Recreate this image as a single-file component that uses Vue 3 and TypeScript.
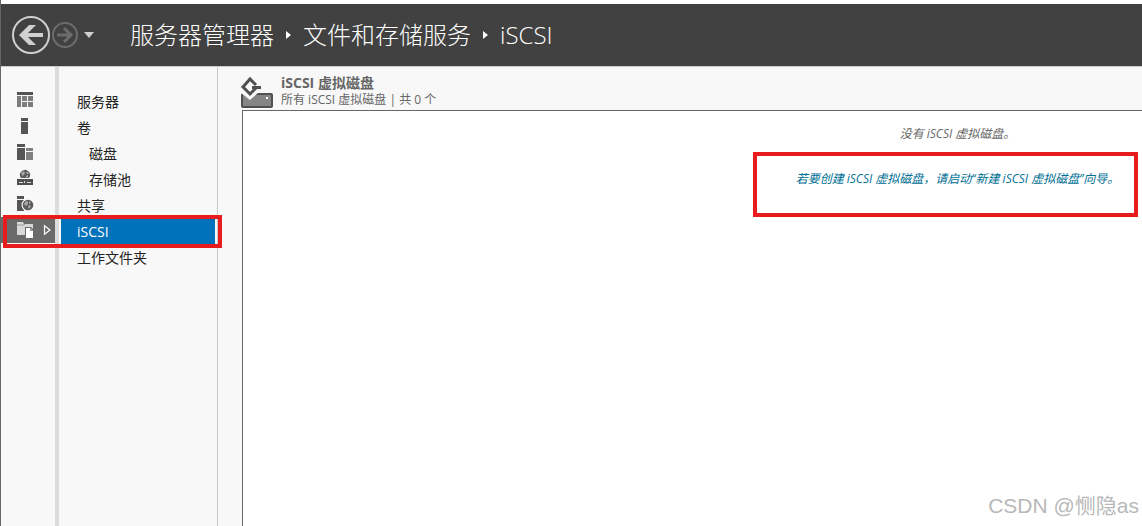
<script setup lang="ts">
import { ref } from 'vue'

interface NavItem {
  label: string
  nested?: boolean
}

const crumbs: string[] = ['服务器管理器', '文件和存储服务', 'iSCSI']
const railItems: string[] = ['仪表板', '本地服务器', '所有服务器', '存储', '远程', '文件和存储服务']
const navItems: NavItem[] = [
  { label: '服务器' },
  { label: '卷' },
  { label: '磁盘', nested: true },
  { label: '存储池', nested: true },
  { label: '共享' },
  { label: 'iSCSI' },
  { label: '工作文件夹' },
]
const activeRail = ref(5)
const activeNav = ref(5)
</script>

<template>
  <div class="window">
    <header class="topbar">
      <button class="tool back" aria-label="后退">
        <svg width="38" height="38" viewBox="0 0 38 38">
          <circle cx="19" cy="19" r="18" fill="none" stroke="#d0d0d0" stroke-width="2" />
          <path d="M7 19 17 9H24L16 17H31V21H16L24 29H17Z" fill="#d0d0d0" />
        </svg>
      </button>
      <button class="tool forward" aria-label="前进">
        <svg width="26" height="26" viewBox="0 0 26 26">
          <circle cx="13" cy="13" r="12" fill="none" stroke="#6c6c6c" stroke-width="2" />
          <path d="M5 13H20M12 6 19 13 12 20" fill="none" stroke="#6c6c6c" stroke-width="3" />
        </svg>
      </button>
      <button class="tool history" aria-label="历史记录">
        <svg width="10" height="6" viewBox="0 0 10 6"><path d="M0 0H10L5 6Z" fill="#d0d0d0" /></svg>
      </button>
      <nav class="crumbs">
        <template v-for="(crumb, i) in crumbs" :key="crumb">
          <svg v-if="i > 0" width="5" height="8" viewBox="0 0 5 8"><path d="M0 0 5 4 0 8Z" fill="#fff" /></svg>
          <a href="#">{{ crumb }}</a>
        </template>
      </nav>
    </header>

    <div class="body">
      <aside class="rail">
        <button
          v-for="(name, i) in railItems"
          :key="name"
          class="rail-item"
          :class="{ active: activeRail === i }"
          :aria-label="name"
          @click="activeRail = i"
        >
          <svg width="16" height="16" viewBox="0 0 16 16">
            <g v-if="i === 0">
              <path d="M0 0H16V3H0Z" fill="#555" />
              <path d="M0 4H4V15H0ZM5 4H10V9H5ZM11 4H16V9H11ZM5 10H10V15H5ZM11 10H16V15H11Z" fill="#7c7c7c" />
            </g>
            <path v-else-if="i === 1" d="M4 0H11V3H4ZM4 4H11V16H4Z" fill="#555" />
            <g v-else-if="i === 2">
              <path d="M0 0H8V3H0ZM0 4H8V16H0Z" fill="#555" />
              <path d="M9 4H16V7H9ZM9 8H16V16H9Z" fill="#808080" />
            </g>
            <g v-else-if="i === 3">
              <path d="M4 8A5 5 0 1 1 12 8Z" fill="#5c5c5c" />
              <path d="M4 3 7 1 8 3 6 6 5 5ZM9 2 11 2 12 4 10 4ZM9 6 11 5 11 7 9 8Z" fill="#a8a8a8" />
              <path d="M0 9H16V15H0Z" fill="#505050" />
              <path d="M2 12H6V13H2ZM7 11H8V13H7ZM10 12H14V13H10Z" fill="#ddd" />
            </g>
            <g v-else-if="i === 4">
              <path d="M0 0H7V3H0ZM0 4H7V15H0Z" fill="#555" />
              <circle cx="11" cy="9" r="6.5" fill="#f8f8f8" />
              <circle cx="11" cy="9" r="5.3" fill="#5c5c5c" />
              <path d="M7 8 9 5 11 6 11 8 9 10ZM12 5 14 7 12 8ZM12 9 14 10 12 13 11 11Z" fill="#a8a8a8" />
            </g>
            <g v-else>
              <path d="M0 0H6L7 2H16V13H0Z" fill="#d8d8d8" />
              <path d="M0 3H7L8 2" fill="none" stroke="#999" />
              <path d="M8 5H14L17 8V17H8Z" fill="#6a6a6a" />
              <path d="M9 6H13L16 9V16H9Z" fill="#fff" />
              <path d="M13 6V9H16Z" fill="#999" />
            </g>
          </svg>
          <svg v-if="activeRail === i" width="7" height="10" viewBox="0 0 7 10">
            <path d="M0.5 0.8 6 5 0.5 9.2Z" fill="none" stroke="#fff" stroke-width="1.2" />
          </svg>
        </button>
      </aside>

      <nav class="sidebar">
        <a
          v-for="(item, i) in navItems"
          :key="item.label"
          href="#"
          class="nav-item"
          :class="{ nested: item.nested, active: activeNav === i }"
          @click.prevent="activeNav = i"
        >{{ item.label }}</a>
      </nav>
      <div class="mark mark-nav"></div>

      <main class="content">
        <div class="heading">
          <svg width="32" height="32" viewBox="0 0 32 32">
            <rect x="1" y="17" width="30" height="13" rx="1" fill="#858585" stroke="#505050" stroke-width="2" />
            <rect x="25" y="20" width="2" height="2" fill="#fff" />
            <path d="M0 15H5L9 20 14 15H18L9 23 0 16Z" fill="#f8f8f8" />
            <path d="M16 8 9 2 2 10 9 17 16 11" fill="none" stroke="#f8f8f8" stroke-width="5" />
            <path d="M15 8 9 2 2 10 9 17 15 11" fill="none" stroke="#505050" stroke-width="3" />
            <path d="M11 9H20V12H11Z" fill="#505050" />
          </svg>
          <div>
            <h1>iSCSI 虚拟磁盘</h1>
            <p>所有 iSCSI 虚拟磁盘 | 共 0 个</p>
          </div>
        </div>
        <section class="panel">
          <p class="empty">没有 iSCSI 虚拟磁盘。</p>
          <div class="prompt">
            <a href="#">若要创建 iSCSI 虚拟磁盘，请启动“新建 iSCSI 虚拟磁盘”向导。</a>
            <div class="mark mark-prompt"></div>
          </div>
        </section>
      </main>
    </div>
    <div class="watermark">CSDN @恻隐as</div>
  </div>
</template>

<style>
body {
  margin: 0;
}
</style>

<style scoped>
* {
  box-sizing: border-box;
}
.window {
  position: relative;
  display: flex;
  flex-direction: column;
  min-height: 100vh;
  padding-top: 4px;
  border-left: 1px solid #666;
  background: #fff;
  overflow: hidden;
  font-family: "Open Sans", "Noto Sans CJK SC", sans-serif;
}
h1,
p {
  margin: 0;
}
a {
  color: inherit;
  text-decoration: none;
}
button {
  border: 0;
  padding: 0;
  background: none;
}
svg {
  display: block;
  flex: none;
  overflow: visible;
}
.topbar {
  display: flex;
  align-items: center;
  height: 62px;
  padding-left: 11px;
  background: #414141;
}
.forward {
  margin-left: 2px;
}
.history {
  margin-left: 6px;
}
.crumbs {
  display: flex;
  align-items: center;
  gap: 12px;
  margin-left: 36px;
  color: #fff;
  font-size: 24px;
  font-weight: 300;
  line-height: 32px;
  white-space: nowrap;
}
.body {
  position: relative;
  display: flex;
  flex: 1;
  border-top: 1px solid #ccc;
  background: #f8f8f8;
}
.rail {
  width: 58px;
  padding-top: 20px;
  border-right: 4px solid #dcdcdc;
}
.rail-item {
  display: flex;
  align-items: center;
  gap: 11px;
  width: 100%;
  height: 26px;
  padding-left: 16px;
}
.rail-item.active {
  background: #6a6a6a;
}
.sidebar {
  width: 159px;
  padding: 22px 2px 0;
  border-right: 1px solid #c8c8c8;
}
.nav-item {
  display: block;
  height: 26px;
  padding-left: 16px;
  color: #222;
  font-size: 14px;
  line-height: 26px;
}
.nav-item.nested {
  padding-left: 28px;
}
.nav-item.active {
  background: #0072bc;
  color: #fff;
}
.mark {
  position: absolute;
  border: 4px solid #e81c1c;
  pointer-events: none;
}
.mark-nav {
  left: 2px;
  top: 148px;
  width: 219px;
  height: 33px;
}
.content {
  display: flex;
  flex: 1;
  flex-direction: column;
  min-width: 0;
  padding-left: 23px;
}
.heading {
  display: flex;
  gap: 8px;
  height: 43px;
  padding-top: 8px;
  color: #666;
}
.heading svg {
  margin-top: 2px;
}
h1 {
  font-size: 14px;
  font-weight: 700;
  line-height: 16px;
}
.heading p {
  font-size: 12px;
  line-height: 18px;
}
.panel {
  flex: 1;
  margin-left: 1px;
  padding: 14px 0 0 530px;
  border-top: 1px solid #666;
  border-left: 1px solid #666;
  background: #fff;
  font-size: 12px;
  font-style: italic;
  line-height: 18px;
  text-align: center;
  white-space: nowrap;
}
.empty {
  color: #666;
}
.prompt {
  position: relative;
  margin-top: 27px;
  color: #006f94;
}
.mark-prompt {
  inset: -18px 4px auto -20px;
  height: 65px;
}
.watermark {
  position: absolute;
  right: 3px;
  bottom: 6px;
  color: #b8b8b8;
  font-family: "Liberation Sans", "Noto Sans CJK SC", sans-serif;
  font-size: 21px;
  line-height: 28px;
}
</style>
